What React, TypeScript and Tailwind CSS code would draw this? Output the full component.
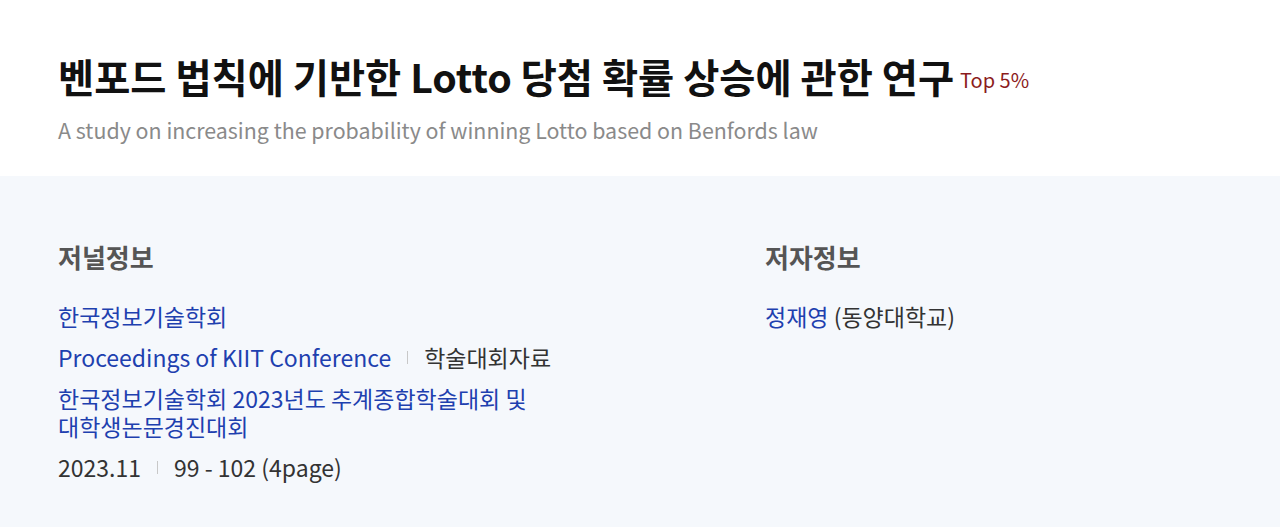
import React from "react";

const font = { fontFamily: '"Noto Sans CJK KR", "Noto Sans", sans-serif' };

function Sep() {
  return <span className="mx-[16px] inline-block h-[13px] w-px bg-[#c8c8c8] align-middle" />;
}

export default function App() {
  return (
    <div className="min-h-[527px] bg-white" style={font}>
      <div className="px-[58px] pt-[50px] pb-[31px]">
        <div className="flex items-center">
          <h1 className="text-[39.3px] font-bold leading-[52px] text-[#111]">
            벤포드 법칙에 기반한 Lotto 당첨 확률 상승에 관한 연구
          </h1>
          <span className="ml-[6px] mt-[8px] text-[20px] leading-[26px] text-[#8c1c1c]">Top 5%</span>
        </div>
        <p className="mt-[13px] text-[21.4px] leading-[30px] text-[#8a8a8a]">
          A study on increasing the probability of winning Lotto based on Benfords law
        </p>
      </div>
      <div className="flex bg-[#f5f8fc] px-[58px] pt-[65px] pb-[46px]">
        <div className="w-[707px]">
          <h2 className="text-[26px] font-bold leading-[32px] text-[#555]">저널정보</h2>
          <div className="mt-[29px] flex w-[500px] flex-col gap-[13px] break-keep text-[23px] leading-[28px]">
            <a className="text-[#1e40af]">한국정보기술학회</a>
            <div className="flex items-center">
              <a className="text-[#1e40af]">Proceedings of KIIT Conference</a>
              <Sep />
              <span className="text-[#333]">학술대회자료</span>
            </div>
            <a className="text-[#1e40af]">한국정보기술학회 2023년도 추계종합학술대회 및 대학생논문경진대회</a>
            <div className="flex items-center text-[#333]">
              <span>2023.11</span>
              <Sep />
              <span>99 - 102 (4page)</span>
            </div>
          </div>
        </div>
        <div>
          <h2 className="text-[26px] font-bold leading-[32px] text-[#555]">저자정보</h2>
          <div className="mt-[29px] text-[23px] leading-[28px]">
            <a className="text-[#1e40af]">정재영</a>
            <span className="text-[#333]"> (동양대학교)</span>
          </div>
        </div>
      </div>
    </div>
  );
}
